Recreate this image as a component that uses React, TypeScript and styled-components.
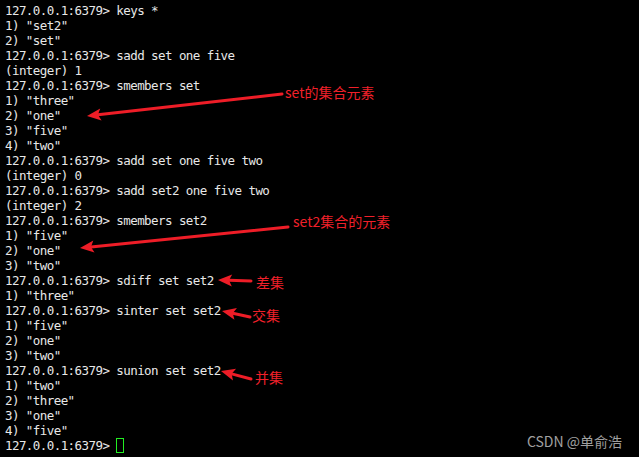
import React from "react";
import styled, { createGlobalStyle } from "styled-components";

const Global = createGlobalStyle`
  html, body { margin: 0; padding: 0; background: #000; }
  body { width: 639px; height: 457px; overflow: hidden; }
`;

const Screen = styled.div`
  position: relative;
  width: 639px;
  height: 457px;
  background: #000;
  overflow: hidden;
`;

const Terminal = styled.div`
  display: flex;
  flex-direction: column;
  padding: 3px 0 0 5px;
  font-family: "DejaVu Sans Mono", "Liberation Mono", monospace;
  font-size: 12.5px;
  letter-spacing: -0.57px;
  color: #e8e8e8;
`;

const Line = styled.div`
  height: 15px;
  line-height: 15px;
  white-space: pre;
  display: flex;
  align-items: center;
`;

const Cursor = styled.span`
  display: inline-block;
  width: 6px;
  height: 13px;
  border: 1px solid #22ee22;
`;

const Overlay = styled.svg`
  position: absolute;
  left: 0;
  top: 0;
  width: 639px;
  height: 457px;
  pointer-events: none;
`;

const Label = styled.div<{ $x: number; $y: number }>`
  position: absolute;
  left: ${(p) => p.$x}px;
  top: ${(p) => p.$y}px;
  font-family: "Noto Sans CJK SC", "Noto Sans", sans-serif;
  font-size: 14px;
  line-height: 16px;
  color: #f0202a;
  white-space: nowrap;
`;

const Watermark = styled.div`
  position: absolute;
  right: 17px;
  bottom: 7px;
  font-family: "Noto Sans CJK SC", "Liberation Sans", sans-serif;
  font-size: 14px;
  line-height: 18px;
  color: #a0a0a0;
  white-space: nowrap;
`;

const P = "127.0.0.1:6379> ";

const lines: string[] = [
  P + "keys *",
  '1) "set2"',
  '2) "set"',
  P + "sadd set one five",
  "(integer) 1",
  P + "smembers set",
  '1) "three"',
  '2) "one"',
  '3) "five"',
  '4) "two"',
  P + "sadd set one five two",
  "(integer) 0",
  P + "sadd set2 one five two",
  "(integer) 2",
  P + "smembers set2",
  '1) "five"',
  '2) "one"',
  '3) "two"',
  P + "sdiff set set2",
  '1) "three"',
  P + "sinter set set2",
  '1) "five"',
  '2) "one"',
  '3) "two"',
  P + "sunion set set2",
  '1) "two"',
  '2) "three"',
  '3) "one"',
  '4) "five"',
];

type Arrow = { tip: [number, number]; tail: [number, number] };

const arrows: Arrow[] = [
  { tip: [87, 116], tail: [282, 94] },
  { tip: [80, 248], tail: [288, 227] },
  { tip: [218, 280], tail: [251, 281] },
  { tip: [222, 311], tail: [250, 317] },
  { tip: [221, 371], tail: [251, 379] },
];

const RED = "#ee1d27";

function ArrowShape({ tip, tail }: Arrow) {
  const dx = tail[0] - tip[0];
  const dy = tail[1] - tip[1];
  const len = Math.hypot(dx, dy);
  const ux = dx / len;
  const uy = dy / len;
  const nx = -uy;
  const ny = ux;
  const L = 14;
  const W = 6;
  const bx = tip[0] + ux * L;
  const by = tip[1] + uy * L;
  const nbx = tip[0] + ux * (L - 3);
  const nby = tip[1] + uy * (L - 3);
  const pts = [
    [tip[0], tip[1]],
    [bx + nx * W, by + ny * W],
    [nbx, nby],
    [bx - nx * W, by - ny * W],
  ]
    .map((p) => p.join(","))
    .join(" ");
  return (
    <g>
      <line
        x1={nbx}
        y1={nby}
        x2={tail[0]}
        y2={tail[1]}
        stroke={RED}
        strokeWidth={3}
        strokeLinecap="round"
      />
      <polygon points={pts} fill={RED} />
    </g>
  );
}

export default function App() {
  return (
    <>
      <Global />
      <Screen>
        <Terminal>
          {lines.map((l, i) => (
            <Line key={i}>{l}</Line>
          ))}
          <Line>
            {P}
            <Cursor />
          </Line>
        </Terminal>
        <Overlay viewBox="0 0 639 457">
          {arrows.map((a, i) => (
            <ArrowShape key={i} {...a} />
          ))}
        </Overlay>
        <Label $x={285} $y={84}>set的集合元素</Label>
        <Label $x={293} $y={213}>set2集合的元素</Label>
        <Label $x={256} $y={274}>差集</Label>
        <Label $x={252} $y={307}>交集</Label>
        <Label $x={255} $y={369}>并集</Label>
        <Watermark>CSDN @单俞浩</Watermark>
      </Screen>
    </>
  );
}
